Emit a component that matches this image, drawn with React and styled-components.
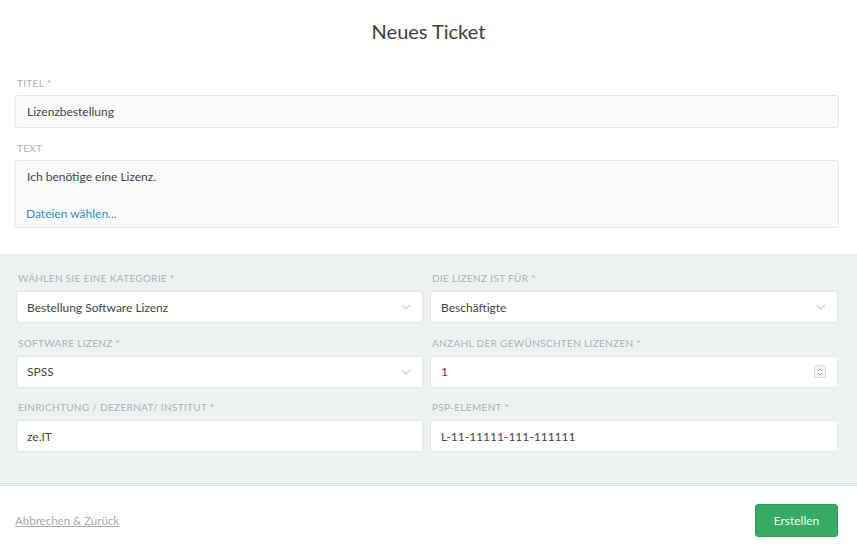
import styled, { createGlobalStyle } from "styled-components";

const GlobalStyle = createGlobalStyle`
  html, body {
    margin: 0;
    padding: 0;
    background: #fff;
  }
  body {
    font-family: Lato, "Open Sans", sans-serif;
    color: #444;
  }
  * { box-sizing: border-box; }
`;

const ChevronDown = () => (
  <svg width="10" height="6" viewBox="0 0 10 6" fill="none">
    <path d="M1 1l4 4 4-4" stroke="#cdd0d2" strokeWidth="1.1" />
  </svg>
);

const Spinner = () => (
  <SpinBox>
    <svg width="6" height="10" viewBox="0 0 6 10" fill="none">
      <path d="M1 4l2-2 2 2M1 6l2 2 2-2" stroke="#a9adb0" strokeWidth="1" />
    </svg>
  </SpinBox>
);

function Field({ label, gap, spacing, children }) {
  return (
    <StyledField $spacing={spacing}>
      <Label $gap={gap}>{label}</Label>
      {children}
    </StyledField>
  );
}

const App = () => {
  return (
    <>
      <GlobalStyle />
      <Page>
        <Header>Neues Ticket</Header>

        <TopSection>
          <Field label="Titel *" gap={3} spacing={15}>
            <TopInput>Lizenzbestellung</TopInput>
          </Field>
          <Field label="Text" gap={3} spacing={0}>
            <TextArea>
              <p>Ich benötige eine Lizenz.</p>
              <FileLink>Dateien wählen...</FileLink>
            </TextArea>
          </Field>
        </TopSection>

        <AttrSection>
          <Column>
            <Field label="Wählen Sie eine Kategorie *">
              <Control>
                Bestellung Software Lizenz
                <ChevronDown />
              </Control>
            </Field>
            <Field label="Software Lizenz *">
              <Control>
                SPSS
                <ChevronDown />
              </Control>
            </Field>
            <Field label="Einrichtung / Dezernat/ Institut *" spacing={0}>
              <Control>ze.IT</Control>
            </Field>
          </Column>
          <Column>
            <Field label="Die Lizenz ist für *">
              <Control>
                Beschäftigte
                <ChevronDown />
              </Control>
            </Field>
            <Field label="Anzahl der gewünschten Lizenzen *">
              <Control>
                1
                <Spinner />
              </Control>
            </Field>
            <Field label="PSP-Element *" spacing={0}>
              <Control>L-11-11111-111-111111</Control>
            </Field>
          </Column>
        </AttrSection>

        <Footer>
          <CancelLink>Abbrechen &amp; Zurück</CancelLink>
          <SubmitButton>Erstellen</SubmitButton>
        </Footer>
      </Page>
    </>
  );
};
export default App;

/****************** styled components ***************/

const Page = styled.div`
  width: 857px;
  height: 548px;
  overflow: hidden;
  display: flex;
  flex-direction: column;
`;

const Header = styled.h1`
  margin: 0;
  height: 64px;
  line-height: 63px;
  text-align: center;
  font-size: 20px;
  font-weight: 400;
  color: #3e3e3e;
`;

const TopSection = styled.div`
  padding: 14px 18px 26px 15px;
`;

const StyledField = styled.div`
  display: flex;
  flex-direction: column;
  margin-bottom: ${(p) => (p.$spacing ?? 14.5)}px;
`;

const Label = styled.label`
  font-size: 10px;
  line-height: 10px;
  height: 14px;
  margin: 0 0 ${(p) => p.$gap ?? 4}px 2px;
  text-transform: uppercase;
  letter-spacing: 0.33px;
  color: #aeb2b5;
`;

const TopInput = styled.div`
  height: 33px;
  display: flex;
  align-items: center;
  padding: 0 11px;
  font-size: 12px;
  color: #444;
  background: #f9fafa;
  border: 1px solid #e4e7e9;
  border-radius: 3px;
`;

const TextArea = styled.div`
  height: 68px;
  padding: 8px 10px 6px 10px;
  display: flex;
  flex-direction: column;
  justify-content: space-between;
  font-size: 12px;
  background: #f9fafa;
  border: 1px solid #e4e7e9;
  border-radius: 3px;

  p {
    margin: 0;
    line-height: 15px;
    padding-left: 1px;
  }
`;

const FileLink = styled.a`
  color: #2a8fcf;
  line-height: 15px;
  cursor: pointer;
`;

const AttrSection = styled.div`
  display: grid;
  grid-template-columns: 407px 408px;
  column-gap: 7px;
  padding: 19px 19px 31px 16px;
  background: #eef1f2;
  border-bottom: 3px double #dcdfe1;
`;

const Column = styled.div`
  display: flex;
  flex-direction: column;
`;

const Control = styled.div`
  height: 32px;
  display: flex;
  align-items: center;
  justify-content: space-between;
  padding: 0 11px 0 10px;
  font-size: 12px;
  color: #444;
  background: #fff;
  border: 1px solid #e3e6e8;
  border-radius: 3px;
`;

const SpinBox = styled.span`
  width: 12px;
  height: 13px;
  display: flex;
  align-items: center;
  justify-content: center;
  background: #f1f2f3;
  border: 1px solid #dfe1e3;
  border-radius: 2px;
`;

const Footer = styled.div`
  display: flex;
  align-items: center;
  justify-content: space-between;
  padding: 18px 19px 0 15px;
`;

const CancelLink = styled.a`
  font-size: 11.5px;
  color: #a8abad;
  text-decoration: underline;
  cursor: pointer;
`;

const SubmitButton = styled.button`
  width: 83px;
  height: 33px;
  border: 1px solid #2f9d5a;
  border-radius: 3px;
  background: #36ab63;
  color: #eefaf2;
  font-family: inherit;
  font-size: 12px;
  cursor: pointer;
`;
